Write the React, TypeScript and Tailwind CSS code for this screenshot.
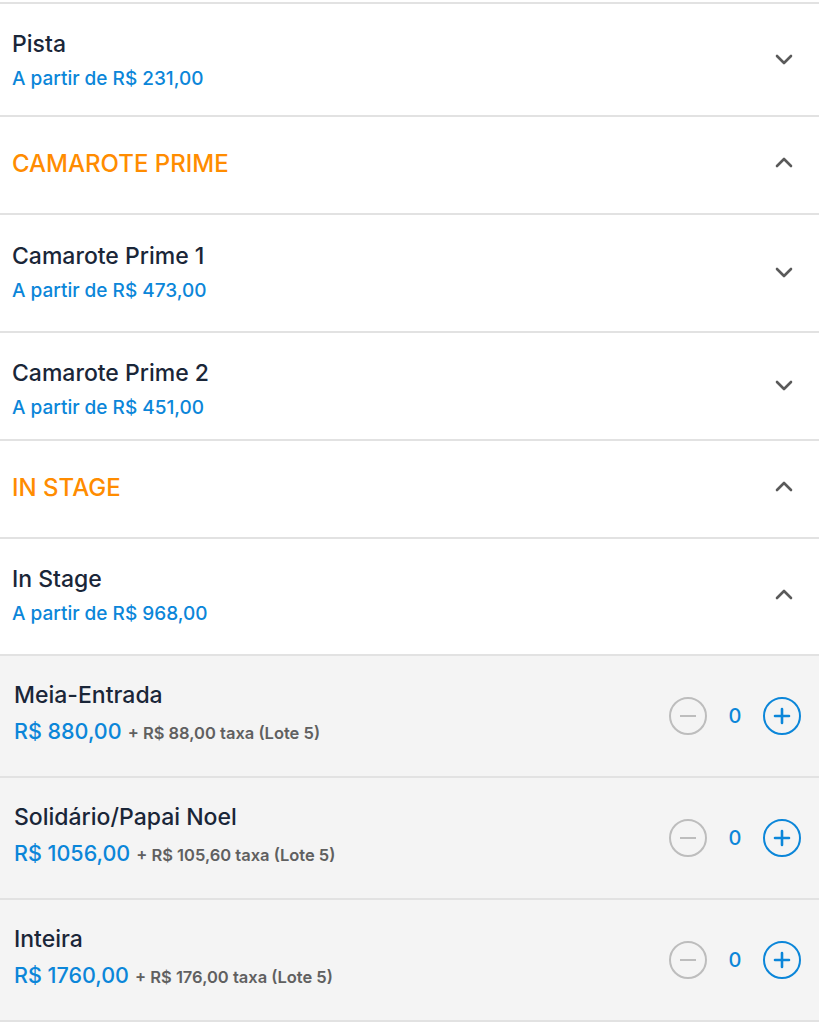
import { ReactNode } from "react";

const font = { fontFamily: "Inter, 'Noto Sans', sans-serif" };

function Chevron({ up }: { up?: boolean }) {
  return (
    <svg width="18" height="12" viewBox="0 0 18 12" className={`shrink-0 ${up ? "-translate-y-[3px]" : ""}`}>
      <path
        d={up ? "M2 10 L9 3 L16 10" : "M2 2 L9 9 L16 2"}
        fill="none"
        stroke="#5a5a5a"
        strokeWidth="2.6"
        strokeLinecap="round"
        strokeLinejoin="round"
      />
    </svg>
  );
}

function Row({ h, children, gray }: { h: string; children: ReactNode; gray?: boolean }) {
  return (
    <div className={`flex items-center justify-between border-b-2 border-[#e2e2e2] pl-3 pr-[26px] ${h} ${gray ? "bg-[#f4f4f4]" : "bg-white"}`}>
      {children}
    </div>
  );
}

function Sector({ name, price, h, up, pad = "pt-[2px]" }: { name: string; price: string; h: string; up?: boolean; pad?: string }) {
  return (
    <Row h={h}>
      <div className={`flex flex-col gap-[10px] ${pad}`}>
        <span className="text-[23px] font-medium leading-[26px] text-[#1a2638]">{name}</span>
        <span className="text-[19px] font-medium leading-6 text-[#0b86d9]">A partir de R$ {price}</span>
      </div>
      <Chevron up={up} />
    </Row>
  );
}

function Group({ name, h }: { name: string; h: string }) {
  return (
    <Row h={h}>
      <span className="pb-[3px] text-[24px] font-medium text-[#ff8c00]">{name}</span>
      <Chevron up />
    </Row>
  );
}

function Ticket({ name, price, fee }: { name: string; price: string; fee: string }) {
  return (
    <Row h="h-[122px]" gray>
      <div className="flex flex-col gap-[11px] pb-[4px] pl-[2px]">
        <span className="text-[23px] font-medium leading-[26px] text-[#1a2638]">{name}</span>
        <div className="flex items-baseline gap-[6px]">
          <span className="text-[21.5px] font-medium leading-6 text-[#0b86d9]">{price}</span>
          <span className="text-[16.5px] font-semibold text-[#606060]">+ {fee} taxa (Lote 5)</span>
        </div>
      </div>
      <div className="mr-[-8px] flex items-center">
        <div className="flex h-[38px] w-[38px] items-center justify-center rounded-full border-2 border-[#bdbdbd]">
          <div className="h-[2px] w-[16px] bg-[#bdbdbd]" />
        </div>
        <span className="w-[56px] text-center text-[20px] font-medium text-[#0b86d9]">0</span>
        <div className="flex h-[38px] w-[38px] items-center justify-center rounded-full border-2 border-[#0b86d9]">
          <svg width="18" height="18" viewBox="0 0 18 18">
            <path d="M9 2 V16 M2 9 H16" stroke="#0b86d9" strokeWidth="2.6" strokeLinecap="round" />
          </svg>
        </div>
      </div>
    </Row>
  );
}

export default function App() {
  return (
    <div className="min-h-screen w-[819px] bg-white" style={font}>
      <div className="h-[2px] bg-white" />
      <div className="border-t-2 border-[#e2e2e2]" />
      <Sector name="Pista" price="231,00" h="h-[113px]" />
      <Group name="CAMAROTE PRIME" h="h-[98px]" />
      <Sector name="Camarote Prime 1" price="473,00" h="h-[118px]" pad="pb-[1px]" />
      <Sector name="Camarote Prime 2" price="451,00" h="h-[108px]" pad="pt-[7px]" />
      <Group name="IN STAGE" h="h-[98px]" />
      <Sector name="In Stage" price="968,00" h="h-[117px]" up pad="pb-[1px]" />
      <Ticket name="Meia-Entrada" price="R$ 880,00" fee="R$ 88,00" />
      <Ticket name="Solidário/Papai Noel" price="R$ 1056,00" fee="R$ 105,60" />
      <Ticket name="Inteira" price="R$ 1760,00" fee="R$ 176,00" />
    </div>
  );
}
